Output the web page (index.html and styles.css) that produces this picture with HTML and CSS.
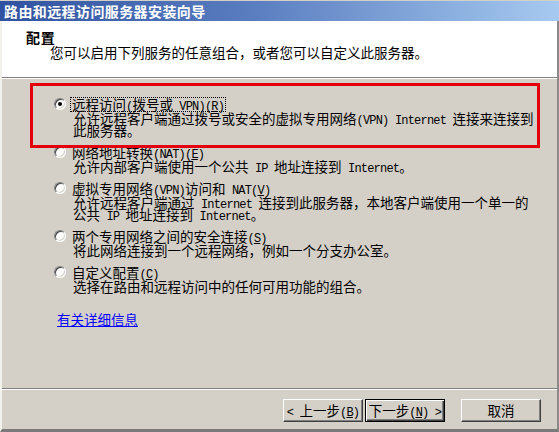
FILE: index.html
```html
<!DOCTYPE html>
<html lang="zh-CN">
<head>
<meta charset="utf-8">
<title>路由和远程访问服务器安装向导</title>
<link rel="stylesheet" href="styles.css">
</head>
<body>
<div class="win">
  <div class="titlebar">路由和远程访问服务器安装向导</div>
  <div class="frame">
    <div class="header">
      <div class="h-title">配置</div>
      <div class="h-sub">您可以启用下列服务的任意组合，或者您可以自定义此服务器。</div>
    </div>
    <div class="content">
      <div class="opt">
        <div class="row"><span class="radio checked"></span><span class="label focus">远程访问<span class="en">(</span>拨号或<span class="en"> VPN)(<u>R</u>)</span></span></div>
        <div class="desc">允许远程客户端通过拨号或安全的虚拟专用网络<span class="en">(VPN) Internet </span>连接来连接到<br>此服务器。</div>
      </div>
      <div class="opt">
        <div class="row"><span class="radio"></span><span class="label">网络地址转换<span class="en">(NAT)(<u>E</u>)</span></span></div>
        <div class="desc">允许内部客户端使用一个公共<span class="en"> IP </span>地址连接到<span class="en"> Internet</span>。</div>
      </div>
      <div class="opt">
        <div class="row"><span class="radio"></span><span class="label">虚拟专用网络<span class="en">(VPN)</span>访问和<span class="en"> NAT(<u>V</u>)</span></span></div>
        <div class="desc">允许远程客户端通过<span class="en"> Internet </span>连接到此服务器，本地客户端使用一个单一的<br>公共<span class="en"> IP </span>地址连接到<span class="en"> Internet</span>。</div>
      </div>
      <div class="opt">
        <div class="row"><span class="radio"></span><span class="label">两个专用网络之间的安全连接<span class="en">(<u>S</u>)</span></span></div>
        <div class="desc">将此网络连接到一个远程网络，例如一个分支办公室。</div>
      </div>
      <div class="opt">
        <div class="row"><span class="radio"></span><span class="label">自定义配置<span class="en">(<u>C</u>)</span></span></div>
        <div class="desc">选择在路由和远程访问中的任何可用功能的组合。</div>
      </div>
      <a class="link" href="#">有关详细信息</a>
    </div>
    <div class="sep"></div>
    <div class="buttons">
      <button class="btn"><span class="en">&lt; </span>上一步<span class="en">(<u>B</u>)</span></button>
      <button class="btn default">下一步<span class="en">(<u>N</u>) &gt;</span></button>
      <button class="btn cancel">取消</button>
    </div>
  </div>
  <div class="highlight"></div>
</div>
</body>
</html>
```

FILE: styles.css
```css
html, body {
  margin: 0;
  padding: 0;
  background: #d4d0c8;
}
body {
  font-family: "Noto Sans CJK SC", "Noto Sans", sans-serif;
  font-size: 13.5px;
  color: #000;
}
.win {
  position: relative;
  width: 559px;
  height: 432px;
  overflow: hidden;
  display: flex;
  flex-direction: column;
}
.titlebar {
  height: 21px;
  line-height: 21px;
  padding-left: 4px;
  color: #fff;
  font-weight: bold;
  font-size: 14px;
  letter-spacing: 0.4px;
  background: linear-gradient(to right, #2f53a0, #5a7dc0 45%, #a6caf0);
  border-top: 1px solid #d4d0c8;
  box-sizing: border-box;
}
.frame {
  flex: 1;
  display: flex;
  flex-direction: column;
  border-left: 2px solid #f2f1ec;
  border-right: 2px solid #8a8a8a;
  border-bottom: 3px solid #7a7a7a;
}
.header {
  height: 57px;
  box-sizing: border-box;
  background: #fff;
  padding: 9px 0 0 24px;
  border-bottom: 1px solid #808080;
  box-shadow: 0 1px 0 #fff;
  margin-bottom: 1px;
}
.h-title {
  font-weight: bold;
  font-size: 14px;
  letter-spacing: 0.8px;
  line-height: 15px;
}
.h-sub {
  line-height: 15px;
  padding-left: 24px;
}
.content {
  flex: 1;
  padding: 18px 0 0 52px;
  display: flex;
  flex-direction: column;
  gap: 9px;
}
.opt {
  display: flex;
  flex-direction: column;
  gap: 1px;
}
.row {
  display: flex;
  align-items: center;
  height: 14px;
  gap: 4px;
}
.radio {
  position: relative;
  width: 10px;
  height: 10px;
  border-radius: 50%;
  background: #fff;
  border: 1px solid;
  border-color: #808080 #ffffff #ffffff #808080;
  box-shadow: inset 1px 1px 0 #404040, inset -1px -1px 0 #d4d0c8;
  flex: none;
}
.radio.checked::after {
  content: "";
  position: absolute;
  left: 3px;
  top: 3px;
  width: 4px;
  height: 4px;
  border-radius: 50%;
  background: #000;
}
.label {
  line-height: 13px;
  padding: 0 1px;
  border: 1px solid transparent;
}
.label.focus {
  border: 1px dotted #000;
}
.desc {
  padding-left: 19px;
  line-height: 12px;
  white-space: nowrap;
}
.en {
  font-family: "Liberation Mono", "DejaVu Sans Mono", monospace;
  font-size: 12px;
  letter-spacing: -0.8px;
  line-height: 0;
  white-space: pre;
}
.link {
  margin-top: 11px;
  margin-left: 3px;
  color: #0000ff;
  text-decoration: underline;
  line-height: 14px;
  align-self: flex-start;
}
.sep {
  height: 1px;
  background: #808080;
  border-bottom: 1px solid #fff;
}
.buttons {
  height: 39px;
  box-sizing: border-box;
  padding: 9px 16px 0 0;
  display: flex;
  justify-content: flex-end;
  align-items: flex-start;
}
.btn {
  width: 80px;
  height: 23px;
  box-sizing: border-box;
  padding: 0;
  margin: 0;
  font-family: "Noto Sans CJK SC", "Noto Sans", sans-serif;
  font-size: 13.5px;
  line-height: 17px;
  color: #000;
  background: #d4d0c8;
  border: 1px solid;
  border-color: #ffffff #404040 #404040 #ffffff;
  box-shadow: inset -1px -1px 0 #808080;
}
.btn.default {
  margin-left: 2px;
  border: 1px solid #000;
  box-shadow: inset 1px 1px 0 #fff, inset -1px -1px 0 #404040, inset -2px -2px 0 #808080;
}
.btn.cancel {
  margin-left: 16px;
}
.highlight {
  position: absolute;
  left: 30px;
  top: 83px;
  width: 510px;
  height: 65px;
  box-sizing: border-box;
  border: 3px solid #e3000b;
  pointer-events: none;
}
```
